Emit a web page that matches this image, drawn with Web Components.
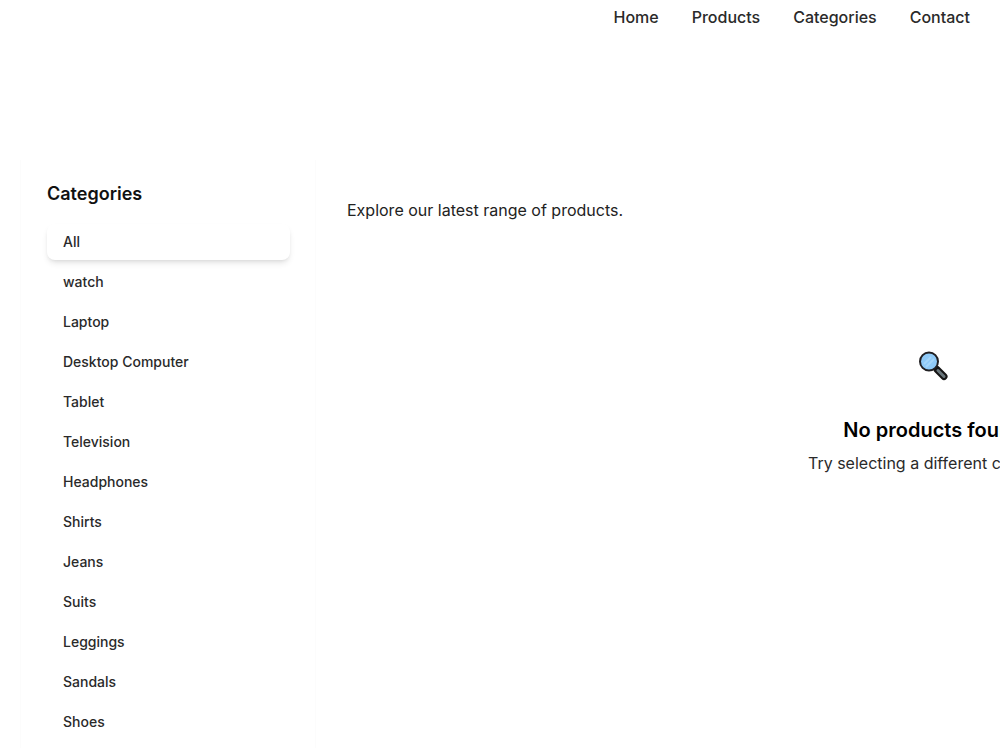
<!DOCTYPE html>
<html lang="en">
<head>
<meta charset="utf-8">
<title>Products</title>
<style>
html, body { margin: 0; background: #fff; }
body { font-family: Inter, sans-serif; color: #111; }
</style>
</head>
<body>
<shop-page></shop-page>
<script>
class ShopNav extends HTMLElement {
  constructor() {
    super();
    this.attachShadow({ mode: 'open' }).innerHTML = `
      <style>
        :host { display: block; }
        nav { display: flex; justify-content: flex-end; gap: 33px; padding: 4px 30px 0 0; }
        a { color: #2a2a2a; text-decoration: none; font-size: 16px; line-height: 26px; font-weight: 500; }
      </style>
      <nav aria-label="Main"><a href="#home">Home</a><a href="#products">Products</a><a href="#categories">Categories</a><a href="#contact">Contact</a></nav>`;
  }
}
class CategoryItem extends HTMLElement {
  constructor() {
    super();
    this.attachShadow({ mode: 'open' }).innerHTML = `
      <style>
        :host { display: block; }
        button { display: block; width: 100%; border: 0; border-radius: 8px; background: transparent; text-align: left; padding: 8px 16px; font: 500 14px/20px Inter, sans-serif; color: #2a2a2a; cursor: pointer; }
        :host([selected]) button { background: #fff; box-shadow: 0 4px 6px -1px rgba(0,0,0,.1), 0 2px 4px -2px rgba(0,0,0,.1); }
      </style>
      <button type="button"><slot></slot></button>`;
  }
}
class CategoryList extends HTMLElement {
  constructor() {
    super();
    this.attachShadow({ mode: 'open' }).innerHTML = `
      <style>
        :host { display: block; }
        h2 { margin: 0 0 16px; font-size: 18px; line-height: 28px; font-weight: 600; color: #111; }
        div { display: grid; gap: 4px; }
      </style>
      <h2>Categories</h2><div><slot></slot></div>`;
  }
}
class EmptyState extends HTMLElement {
  constructor() {
    super();
    this.attachShadow({ mode: 'open' }).innerHTML = `
      <style>
        :host { display: flex; flex-direction: column; align-items: center; text-align: center; }
        svg { width: 32px; height: 32px; margin-bottom: 32px; }
        h3 { margin: 0 0 4px; font-size: 20px; line-height: 32px; font-weight: 600; color: #000; white-space: nowrap; }
        p { margin: 0; font-size: 16px; line-height: 26px; color: #2a2a2a; white-space: nowrap; }
      </style>
      <svg viewBox="0 0 32 32" fill="none" aria-hidden="true">
        <path d="M19 19.5L26 26.5" stroke="#151515" stroke-width="7" stroke-linecap="round"/>
        <path d="M16 16L20 20" stroke="#151515" stroke-width="3"/>
        <path d="M20 20.5L26 26.5" stroke="#68757a" stroke-width="3" stroke-linecap="round"/>
        <circle cx="11" cy="11.5" r="9" fill="#8fcaf8" stroke="#201f22" stroke-width="2"/>
        <path d="M6 14L13 7M8 17L16 9" stroke="#a5d6fa" stroke-width="2"/>
      </svg>
      <h3><slot name="title"></slot></h3><p><slot></slot></p>`;
  }
}
class ShopPage extends HTMLElement {
  constructor() {
    super();
    const names = ['All','watch','Laptop','Desktop Computer','Tablet','Television','Headphones','Shirts','Jeans','Suits','Leggings','Sandals','Shoes'];
    this.attachShadow({ mode: 'open' }).innerHTML = `
      <style>
        :host { display: block; overflow: hidden; }
        .body { display: grid; grid-template-columns: 296px 1fr; margin: 130px 0 0 20px; }
        aside { padding: 20px 25px 8px 26px; border: 1px solid #fcfcfc; border-width: 0 1px; }
        main { padding: 36px 0 0 31px; min-width: 0; }
        .intro { margin: 0; font-size: 16px; line-height: 28px; color: #222; }
        .results { width: 1173px; margin-top: 126px; }
      </style>
      <shop-nav></shop-nav>
      <div class="body">
        <aside><category-list>${names.map((n, i) => `<category-item${i ? '' : ' selected'}>${n}</category-item>`).join('')}</category-list></aside>
        <main>
          <p class="intro">Explore our latest range of products.</p>
          <empty-state class="results"><span slot="title">No products found</span>Try selecting a different category</empty-state>
        </main>
      </div>`;
  }
}
customElements.define('shop-nav', ShopNav);
customElements.define('category-item', CategoryItem);
customElements.define('category-list', CategoryList);
customElements.define('empty-state', EmptyState);
customElements.define('shop-page', ShopPage);
</script>
</body>
</html>
